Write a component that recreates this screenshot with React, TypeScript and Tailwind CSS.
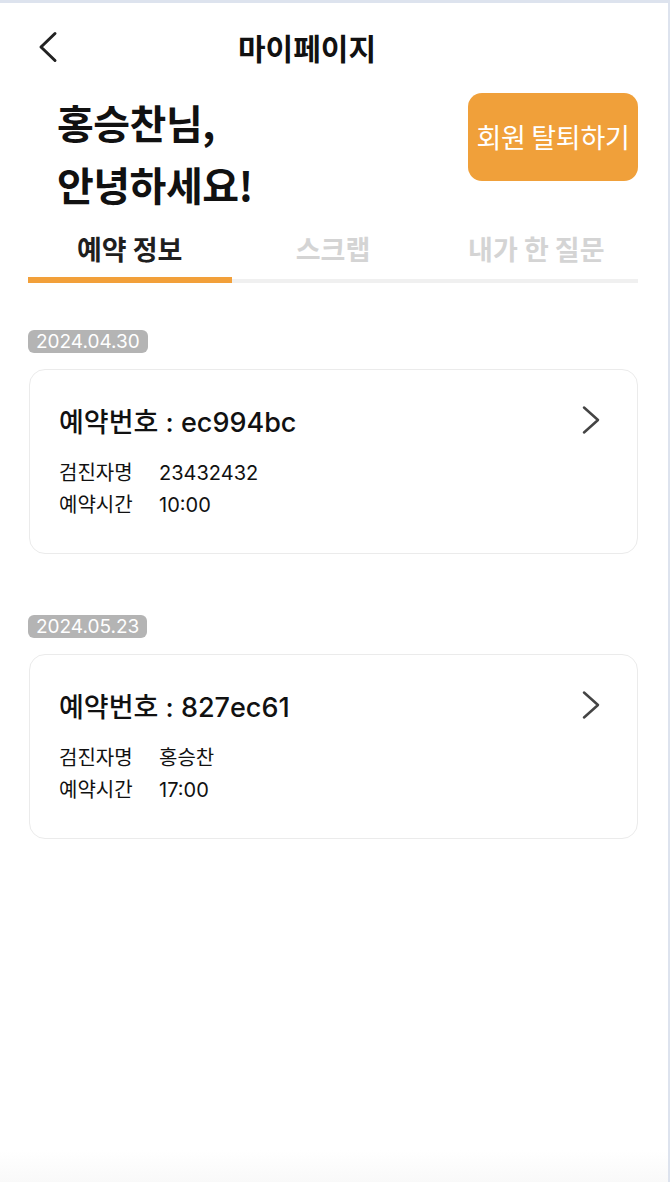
import React from "react";

const KR = { fontFamily: "'Noto Sans CJK KR', sans-serif" };
const MIX = { fontFamily: "Inter, 'Noto Sans CJK KR', sans-serif" };

function ChevronLeftIcon() {
  return (
    <svg width="22" height="32" viewBox="0 0 22 32" fill="none">
      <polyline points="18,2.5 4,16 18,29.5" stroke="#222" strokeWidth="3" strokeLinecap="round" strokeLinejoin="round" />
    </svg>
  );
}

function ChevronRightIcon() {
  return (
    <svg width="20" height="30" viewBox="0 0 20 30" fill="none">
      <polyline points="3,2.5 17,15 3,27.5" stroke="#444" strokeWidth="2.5" strokeLinecap="round" strokeLinejoin="round" />
    </svg>
  );
}

type Reservation = { date: string; code: string; name: string; time: string };

const data: Reservation[] = [
  { date: "2024.04.30", code: "ec994bc", name: "23432432", time: "10:00" },
  { date: "2024.05.23", code: "827ec61", name: "홍승찬", time: "17:00" },
];

function Card({ r, first }: { r: Reservation; first: boolean }) {
  return (
    <div className={first ? "" : "mt-[61px]"}>
      <div className="inline-flex h-[23px] items-center rounded-[6px] bg-[#b4b4b4] px-[8px] text-[19px] leading-none text-white" style={MIX}>
        {r.date}
      </div>
      <div className="mt-[15px] ml-[1px] flex h-[185px] items-start justify-between rounded-[16px] border-[1.5px] border-[#ebebeb] bg-white pl-[29px] pr-[36px] pt-[35px]">
        <div>
          <div className="text-[27px] font-medium leading-[36px] text-[#111]" style={MIX}>
            예약번호 : {r.code}
          </div>
          <div className="mt-[16px] flex flex-col text-[20px] leading-[32px] text-[#111]" style={MIX}>
            <div className="flex">
              <span className="w-[100px]">검진자명</span>
              <span>{r.name}</span>
            </div>
            <div className="flex">
              <span className="w-[100px]">예약시간</span>
              <span>{r.time}</span>
            </div>
          </div>
        </div>
        <div className="mt-[0px]">
          <ChevronRightIcon />
        </div>
      </div>
    </div>
  );
}

export default function App() {
  return (
    <div className="flex h-[1182px] w-[670px] flex-col overflow-hidden border-t-[3px] border-r-[2px] border-[#dde3ee] bg-white">
      {/* header */}
      <div className="relative flex h-[88px] shrink-0 items-center justify-center">
        <div className="absolute left-[37px] top-[28px]">
          <ChevronLeftIcon />
        </div>
        <h1 className="ml-[-54px] text-[30px] font-bold leading-none text-[#111]" style={KR}>
          마이페이지
        </h1>
      </div>

      {/* greeting */}
      <div className="flex items-start justify-between pl-[57px] pr-[30px]">
        <div className="text-[40px] font-bold leading-[62px] tracking-[-0.5px] text-[#111]" style={KR}>
          <div>홍승찬님,</div>
          <div>안녕하세요!</div>
        </div>
        <button className="mt-[2px] flex h-[88px] w-[170px] items-center justify-center rounded-[14px] bg-[#f0a03a] text-[27px] tracking-[-0.3px] text-white" style={KR}>
          회원 탈퇴하기
        </button>
      </div>

      {/* tabs */}
      <div className="pl-[28px] pr-[30px]">
        <div className="grid grid-cols-3 pt-[16px]">
          <div className="text-center text-[27px] font-bold leading-[36px] text-[#1f1f1f]" style={KR}>예약 정보</div>
          <div className="text-center text-[27px] font-bold leading-[36px] text-[#d4d4d4]" style={KR}>스크랩</div>
          <div className="text-center text-[27px] font-bold leading-[36px] text-[#d4d4d4]" style={KR}>내가 한 질문</div>
        </div>
        <div className="mt-[10px] flex h-[6px] items-end">
          <div className="h-[6px] w-[204px] bg-[#f2a03a]" />
          <div className="h-[4px] flex-1 bg-[#f0f0f0]" />
        </div>
      </div>

      {/* list */}
      <div className="pl-[28px] pr-[30px] pt-[47px]">
        {data.map((r, i) => (
          <Card key={r.code} r={r} first={i === 0} />
        ))}
      </div>

      <div className="flex-1" />
      <div className="h-[32px] shrink-0 bg-gradient-to-b from-white to-[#f9f9f9]" />
    </div>
  );
}
